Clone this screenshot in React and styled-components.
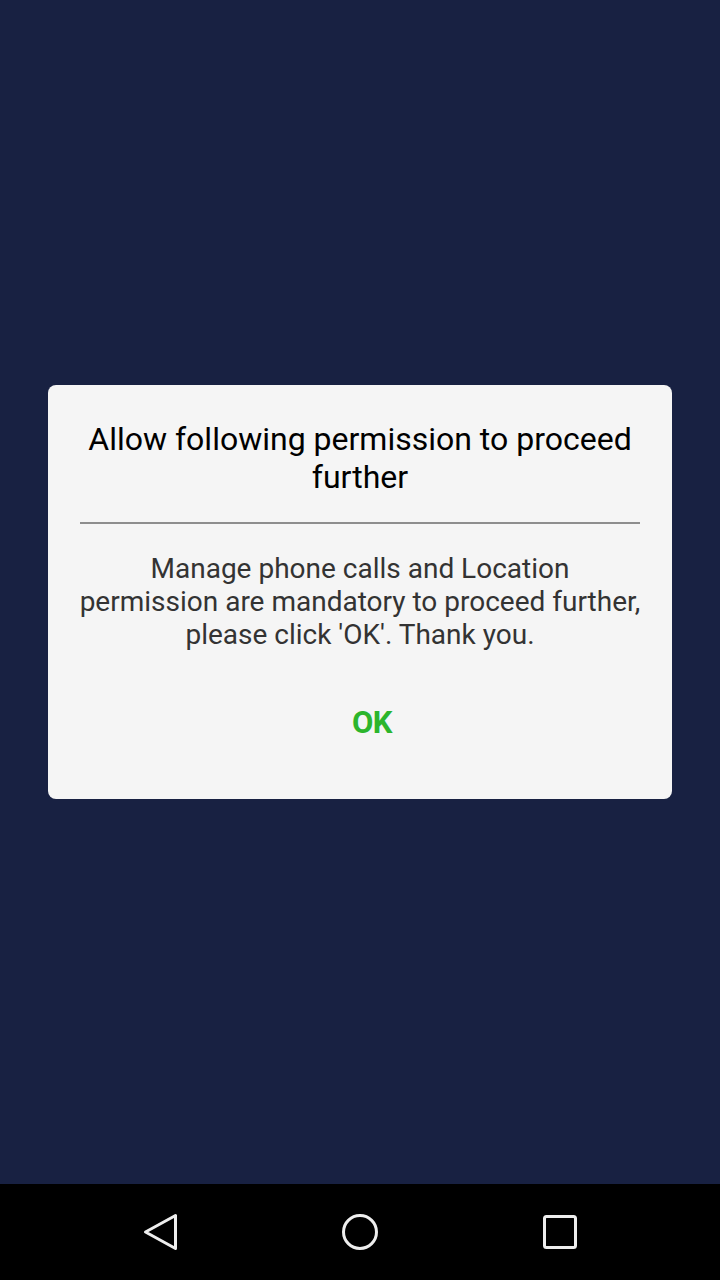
import React from "react";
import styled, { createGlobalStyle } from "styled-components";

const GlobalStyle = createGlobalStyle`
  html, body {
    margin: 0;
    padding: 0;
    background: #182142;
    font-family: Roboto, "Noto Sans", sans-serif;
  }
`;

// permission dialog over the blank app screen
const App = () => {
  return (
    <>
      <GlobalStyle />
      <Screen>
        <Content>
          <Dialog>
            <Title>Allow following permission to proceed further</Title>
            <Divider />
            <Message>
              Manage phone calls and Location
              <br />
              permission are mandatory to proceed further,
              <br />
              please click 'OK'. Thank you.
            </Message>
            <OkButton type="button">OK</OkButton>
          </Dialog>
        </Content>

        {/* android navigation bar */}
        <NavBar>
          <NavButton aria-label="back">
            <svg width="40" height="40" viewBox="0 0 40 40">
              <path
                d="M35.5 3.5 L35.5 36.5 L5.5 20 Z"
                fill="none"
                stroke="#eee"
                strokeWidth="3"
                strokeLinejoin="round"
              />
            </svg>
          </NavButton>
          <NavButton aria-label="home">
            <svg width="40" height="40" viewBox="0 0 40 40">
              <circle cx="20" cy="20" r="16.5" fill="none" stroke="#eee" strokeWidth="3" />
            </svg>
          </NavButton>
          <NavButton aria-label="recents">
            <svg width="40" height="40" viewBox="0 0 40 40">
              <rect
                x="4.5"
                y="4.5"
                width="31"
                height="31"
                rx="2"
                fill="none"
                stroke="#eee"
                strokeWidth="3"
              />
            </svg>
          </NavButton>
        </NavBar>
      </Screen>
    </>
  );
};

const Screen = styled.div`
  width: 720px;
  height: 1280px;
  display: flex;
  flex-direction: column;
  background: #182142;
`;

const Content = styled.main`
  flex: 1;
  padding: 385px 48px 0;
`;

const Dialog = styled.section`
  background: #f5f5f5;
  border-radius: 8px;
  padding: 35px 30px 0;
  height: 414px;
  box-sizing: border-box;
  display: flex;
  flex-direction: column;
  align-items: center;
`;

const Title = styled.h2`
  margin: 0;
  color: #000;
  font-size: 32px;
  font-weight: 400;
  line-height: 38px;
  text-align: center;
`;

const Divider = styled.hr`
  align-self: stretch;
  margin: 26px 2px 0;
  border: none;
  height: 2px;
  background: #8e8e8e;
`;

const Message = styled.p`
  margin: 28px 0 0;
  color: #333;
  font-size: 28px;
  line-height: 33px;
  text-align: center;
  white-space: nowrap;
`;

const OkButton = styled.button`
  margin: 53px 0 0 24px;
  background: none;
  border: none;
  padding: 0;
  color: #2cb52c;
  font-family: Roboto, sans-serif;
  font-size: 31px;
  font-weight: 700;
  line-height: 38px;
  letter-spacing: -0.5px;
`;

const NavBar = styled.nav`
  height: 96px;
  background: #000;
  display: flex;
  justify-content: space-between;
  align-items: center;
  padding: 0 140px;
`;

const NavButton = styled.div`
  width: 40px;
  height: 40px;
  display: flex;
`;

export default App;
